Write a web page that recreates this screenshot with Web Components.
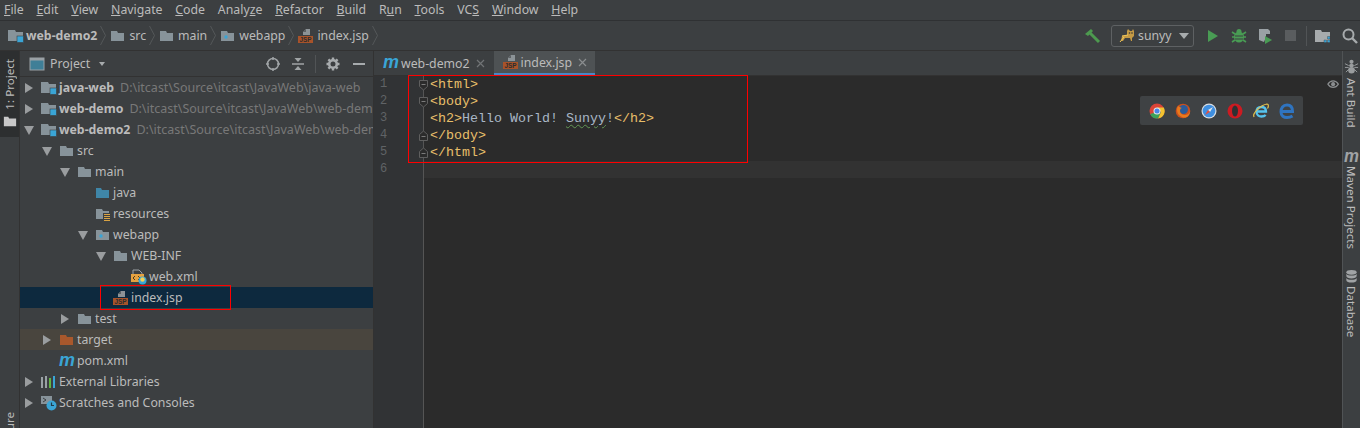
<!doctype html>
<html>
<head>
<meta charset="utf-8">
<title>IDE</title>
<style>
  html, body { margin: 0; height: 100%; overflow: hidden; background: #3c3f41; }
  body { font: 12.3px "Noto Sans", sans-serif; color: #bbbbbb; }
</style>
</head>
<body>
<ide-app></ide-app>
<script>
const ICONS = {
  folder: `<path d="M1 3h6l1 2h6v8H1z" fill="#87939a"/>`,
  module: `<path d="M0 2h7l1 2h7v9H0z" fill="#87939a"/><rect x="9" y="8" width="6.500" height="6.500" fill="#3aa5d6" stroke="#3c3f41" stroke-width=".6"/>`,
  java: `<path d="M1 3h5l1 2h7v8H1z" fill="#3f86a8"/>`,
  resources: `<path d="M1 3h6l1 2h6v8H1z" fill="#87939a"/><rect x="8" y="7" width="8" height="9" fill="#3c3f41"/><path d="M9 8.500h6M9 10.500h6M9 12.500h6M9 14.500h6" stroke="#d9a343" stroke-width="1.200"/>`,
  webapp: `<path d="M1 3h6l1 2h6v8H1z" fill="#87939a"/><circle cx="6" cy="9" r="1.700" fill="#3aa5d6"/>`,
  target: `<path d="M1 3h6l1 2h6v8H1z" fill="#a9582c"/>`,
  jsp: `<path d="M5 7V4l3-3h4v6z" fill="#8c9397"/><path d="M5 4h3V1z" fill="#5d6164"/><rect x="0" y="8" width="15" height="7" fill="#a8532a"/><text x="7.500" y="14" text-anchor="middle" font-family="Liberation Sans" font-size="6.400" font-weight="700" fill="#2d2d2d">JSP</text>`,
  xml: `<path d="M2 6V1h6l3 3v2" fill="none" stroke="#9aa1a5"/><rect x="0" y="5" width="13" height="8" fill="#e5a13f"/><path d="M4 7L2 9l2 2M7 7l2 2-2 2" stroke="#4b3a1c" fill="none"/><circle cx="11.500" cy="11.500" r="4" fill="#3aa5d6"/><circle cx="11.500" cy="10.500" r="2.200" fill="#f1d25a"/>`,
  maven: `<text x="0" y="13" font-family="Liberation Sans" font-style="italic" font-weight="700" font-size="19" fill="#3aa5d6" textLength="16" lengthAdjust="spacingAndGlyphs">m</text>`,
  libs: `<path d="M1 3v11M5 2v12" stroke="#9aa1a5" stroke-width="2"/><path d="M9 4v10" stroke="#62b543" stroke-width="2"/><path d="M13 2v12" stroke="#3aa5d6" stroke-width="2"/>`,
  scratches: `<path d="M0 1h11v8H0z" fill="#87939a"/><path d="M2 3l3 2-3 2" stroke="#3c3f41" fill="none"/><circle cx="10.500" cy="10.500" r="5" fill="#3aa5d6"/><path d="M10.500 7.500v3h2.500" stroke="#1e3c4c" fill="none" stroke-width="1.200"/>`,
  panel: `<rect x="1" y="2" width="14" height="12" fill="#3f7f97" stroke="#9aa1a5"/><rect x="1" y="2" width="14" height="2.500" fill="#9aa1a5"/>`,
  locate: `<circle cx="8" cy="8" r="5.500" fill="none" stroke="#a0a4a6" stroke-width="1.500"/><path d="M8 1v3M8 12v3M1 8h3M12 8h3" stroke="#a0a4a6" stroke-width="1.500"/>`,
  collapse: `<path d="M2 8h12" stroke="#a0a4a6" stroke-width="1.500"/><path d="M4.500 2h7L8 6zM4.500 14h7L8 10z" fill="#a0a4a6"/>`,
  gear: `<circle cx="8" cy="8" r="3.800" fill="none" stroke="#a7abad" stroke-width="2.600"/><path d="M8 1.500v3M8 11.500v3M1.500 8h3M11.500 8h3M3.400 3.400l2 2M10.600 10.600l2 2M12.600 3.400l-2 2M5.400 10.600l-2 2" stroke="#a7abad" stroke-width="2.400"/>`,
  minimize: `<path d="M2 8h12" stroke="#a7abad" stroke-width="2"/>`,
  hammer: `<path d="M1 6l6-5 2 2-5 5z" fill="#4d9a4f"/><path d="M6 5l9 9" stroke="#4d9a4f" stroke-width="3"/>`,
  cat: `<path d="M8 3l1-2 2 2h2l1-2 1 2v5l-2 2v3h-1l-1-3H6l-2 3H2l1-5 5-1z" fill="#c49a45"/><path d="M1 14l4-5M3 8l6-1" stroke="#f0c85a"/><circle cx="10.500" cy="5" r=".8" fill="#333"/><circle cx="13" cy="5" r=".8" fill="#333"/>`,
  run: `<path d="M3 2l10 6-10 6z" fill="#499c54"/>`,
  bug: `<ellipse cx="8" cy="9" rx="5" ry="5.500" fill="#499c54"/><circle cx="8" cy="3.500" r="2.500" fill="#499c54"/><path d="M1 4l3 2M15 4l-3 2M1 9h3M15 9h-3M1 14l3-2M15 14l-3-2" stroke="#499c54" stroke-width="1.600"/><path d="M4 8h8M4 11h8" stroke="#3c3f41"/>`,
  coverage: `<path d="M2 1h9l2 2v3H9v3l-2 5-5-2z" fill="#9aa1a5"/><path d="M8 8l7 4-7 4z" fill="#499c54"/>`,
  stop: `<rect x="2" y="2" width="11" height="11" fill="#5a5d5f"/>`,
  structure: `<path d="M0 2h6l1 2h8v10H0z" fill="#a7abad"/><path d="M9 12h2.500v2.500H9zM12.500 12H15v2.500h-2.500zM12.500 8.500H15V11h-2.500z" fill="#3aa5d6" stroke="#3c3f41" stroke-width=".4"/>`,
  search: `<circle cx="6.500" cy="6.500" r="5" fill="none" stroke="#a7abad" stroke-width="2"/><path d="M10 10l5 5" stroke="#a7abad" stroke-width="2.400"/>`,
  eye: `<path d="M1 7c3-5 9-5 12 0-3 5-9 5-12 0z" fill="none" stroke="#8b8e90" stroke-width="1.300"/><circle cx="7" cy="7" r="2.300" fill="#8b8e90"/>`,
  ant: `<circle cx="8" cy="3" r="2.200" fill="#9a9d9f"/><ellipse cx="8" cy="7" rx="2.500" ry="2" fill="#9a9d9f"/><ellipse cx="8" cy="12" rx="3.500" ry="3.500" fill="#9a9d9f"/><path d="M1 5l4 2M15 5l-4 2M1 9h4M15 9h-4M2 14l3-3M14 14l-3-3" stroke="#9a9d9f"/>`,
  mavenGrey: `<text x="0" y="13" font-family="Liberation Sans" font-style="italic" font-weight="700" font-size="19" fill="#a0a3a5" textLength="16" lengthAdjust="spacingAndGlyphs">m</text>`,
  db: `<ellipse cx="8" cy="3.500" rx="5.500" ry="2.500" fill="#a0a3a5"/><path d="M2.500 5v2.500c0 1.400 2.500 2.500 5.500 2.500s5.500-1.100 5.500-2.500V5c-1 1.500-3 2-5.500 2s-4.500-.5-5.500-2zM2.500 9.500V12c0 1.400 2.500 2.500 5.500 2.500s5.500-1.100 5.500-2.500V9.500c-1 1.500-3 2-5.500 2s-4.500-.5-5.500-2z" fill="#a0a3a5"/>`,
  sideFolder: `<path d="M1 3h5l1 2h8v9H1z" fill="#c8c8c8"/>`,
  chrome: `<circle cx="8" cy="8" r="7.500" fill="#db4437"/><path d="M1.200 11a7.500 7.500 0 0 0 8 4.400L12 9H8z" fill="#3ba35a"/><path d="M8 4.500h6.800a7.500 7.500 0 0 1-5.600 11L12 9z" fill="#f2c230"/><circle cx="8" cy="8" r="3.500" fill="#e8e8e8"/><circle cx="8" cy="8" r="2.500" fill="#4a85e8"/>`,
  firefox: `<circle cx="8" cy="8" r="7.300" fill="#c9501e"/><circle cx="8.500" cy="6.500" r="4.500" fill="#2b5b9a"/><path d="M3 3c-2 4-1 9 4 11s8-2 8-6c-1 3-3 4-5 4-3 0-5-2-5-4 0-2 1-3 2-3-2-1-3-1-4-2z" fill="#e87a1d"/>`,
  safari: `<circle cx="8" cy="8" r="7.500" fill="#d9dde1"/><circle cx="8" cy="8" r="6.300" fill="#3f8fe0"/><path d="M12 4L9 9 7 7z" fill="#e8e8e8"/><path d="M4 12l3-5 2 2z" fill="#e25041"/>`,
  opera: `<circle cx="8" cy="8" r="7.500" fill="#cc1b22"/><ellipse cx="8" cy="8" rx="3" ry="5.500" fill="#2e3133"/>`,
  ie: `<path d="M3.500 8.500h9.500C13 5.500 11 4 8.500 4 5.500 4 3.500 6 3.500 9s2.500 4.500 5 4.500c1.800 0 3.200-.5 4.200-1.500" fill="none" stroke="#56c3ee" stroke-width="2.300"/><path d="M1 14C-1 10 8 2 14 1c2 0 1.500 3 .5 4.500" fill="none" stroke="#e8c24a" stroke-width="1.200"/>`,
  edge: `<path d="M2.500 8.500H13.500C13.500 4 11 2 8 2 4 2 2 5 2 9c0 4 3 5.500 6 5.500 2 0 4-.5 5.500-1.500" fill="none" stroke="#2f74c0" stroke-width="3"/>`
};

class IdeIcon extends HTMLElement {
  connectedCallback() {
    const size = this.getAttribute("size") || 16;
    this.attachShadow({ mode: "open" }).innerHTML = `
      <style>
        :host { display: block; width: ${size}px; height: ${size}px; flex: none; }
        svg { display: block; overflow: visible; }
      </style>
      <svg width="${size}" height="${size}" viewBox="0 0 16 16">${ICONS[this.getAttribute("name")] || ""}</svg>`;
  }
}

class MenuBar extends HTMLElement {
  constructor() {
    super();
    const items = ["File", "Edit", "View", "Navigate", "Code", "Analyze", "Refactor", "Build", "Run", "Tools", "VCS", "Window", "Help"];
    const marks = { Analyze: 5, Run: 1, VCS: 2 };
    const html = items.map((t) => {
      const i = marks[t] || 0;
      return `<span>${t.slice(0, i)}<u>${t[i]}</u>${t.slice(i + 1)}</span>`;
    }).join("");
    this.attachShadow({ mode: "open" }).innerHTML = `
      <style>
        :host { display: flex; height: 20px; padding-left: 4px; gap: 12.800px; align-items: center; border-bottom: 1px solid #2f3133; white-space: nowrap; }
        span { line-height: 20px; }
      </style>${html}`;
  }
}

class NavBar extends HTMLElement {
  constructor() {
    super();
    const chev = `<svg class="chev" viewBox="0 0 6 29"><path d="M0.500 5l5 9.500-5 9.500" fill="none" stroke="#55585a"/></svg>`;
    this.attachShadow({ mode: "open" }).innerHTML = `
      <style>
        :host { display: flex; align-items: center; height: 29px; padding-left: 8px; border-bottom: 1px solid #323232; }
        .crumbs, .tools { display: flex; align-items: center; }
        .crumb { display: flex; align-items: center; gap: 3px; }
        .chev { width: 6px; height: 29px; margin: 0 4px 0 3px; flex: none; }
        b { font-weight: 700; }
        .tools { margin-left: auto; padding-right: 2px; }
        .config { display: flex; align-items: center; gap: 3px; width: 83px; height: 22px; box-sizing: border-box; border: 1px solid #5e6163; border-radius: 3px; padding-left: 7px; margin: 0 11px; }
        .caret { width: 0; height: 0; border: 5px solid transparent; border-top: 6px solid #a7abad; border-bottom: 0; margin-left: 4px; }
        .sep { width: 1px; height: 20px; background: #515456; margin: 0 8px 0 7px; }
        .gap { margin-right: 10px; }
      </style>
      <div class="crumbs">
        <div class="crumb" style="gap:2px"><ide-icon name="module"></ide-icon><b>web-demo2</b></div>${chev}
        <div class="crumb"><ide-icon name="folder"></ide-icon>src</div>${chev}
        <div class="crumb"><ide-icon name="folder"></ide-icon>main</div>${chev}
        <div class="crumb"><ide-icon name="webapp"></ide-icon>webapp</div>${chev}
        <div class="crumb"><ide-icon name="jsp"></ide-icon>index.jsp</div>${chev}
      </div>
      <div class="tools">
        <ide-icon name="hammer"></ide-icon>
        <div class="config"><ide-icon name="cat"></ide-icon>sunyy<i class="caret"></i></div>
        <ide-icon class="gap" name="run"></ide-icon>
        <ide-icon class="gap" name="bug"></ide-icon>
        <ide-icon class="gap" name="coverage"></ide-icon>
        <ide-icon name="stop"></ide-icon>
        <i class="sep"></i>
        <ide-icon name="structure" style="margin-right:11px"></ide-icon>
        <ide-icon name="search"></ide-icon>
      </div>`;
  }
}

class SideStrip extends HTMLElement {
  constructor() {
    super();
    this.attachShadow({ mode: "open" }).innerHTML = `
      <style>
        :host { display: flex; flex-direction: column; align-items: center; overflow: hidden; box-sizing: border-box; flex: none; }
        :host([side="left"]) { width: 20px; border-right: 1px solid #323232; }
        :host([side="right"]) { width: 18px; border-left: 1px solid #505355; }
      </style><slot></slot>`;
  }
}

class StripTab extends HTMLElement {
  constructor() {
    super();
    this.attachShadow({ mode: "open" }).innerHTML = `
      <style>
        :host { display: flex; flex-direction: column; align-items: center; gap: 4px; flex: none; width: 100%; box-sizing: border-box; font-size: 11.600px; line-height: 17px; white-space: nowrap; }
        :host([active]) { background: #2d2f30; }
        .t { writing-mode: vertical-rl; }
        :host([flip]) .t { transform: rotate(180deg); }
      </style><slot name="before"></slot><span class="t"><slot></slot></span><slot name="after"></slot>`;
  }
}

class ToolHeader extends HTMLElement {
  constructor() {
    super();
    this.attachShadow({ mode: "open" }).innerHTML = `
      <style>
        :host { display: flex; align-items: center; height: 26px; padding-left: 9px; box-sizing: border-box; border-bottom: 1px solid #323232; flex: none; }
        .name { margin-left: 5px; }
        .caret { width: 0; height: 0; border: 3.500px solid transparent; border-top: 4px solid #a7abad; border-bottom: 0; margin-left: 9px; }
        .right { margin-left: auto; display: flex; align-items: center; }
        .sep { width: 1px; height: 18px; background: #515456; margin: 0 9px; }
      </style>
      <ide-icon name="panel"></ide-icon><span class="name">Project</span><i class="caret"></i>
      <div class="right">
        <ide-icon name="locate"></ide-icon><ide-icon name="collapse" style="margin-left:9px"></ide-icon>
        <i class="sep"></i>
        <ide-icon name="gear"></ide-icon><ide-icon name="minimize" style="margin:0 6px 0 10px"></ide-icon>
      </div>`;
  }
}

class TreeRow extends HTMLElement {
  connectedCallback() {
    const level = +this.getAttribute("level") || 0;
    const arrow = this.getAttribute("arrow");
    const glyph = arrow === "open"
      ? `<path d="M1 2h10L6 11z" fill="#9a9d9f"/>`
      : arrow === "closed" ? `<path d="M2 1l8 5-8 5z" fill="#9a9d9f"/>` : "";
    this.attachShadow({ mode: "open" }).innerHTML = `
      <style>
        :host { display: flex; align-items: center; height: 21px; padding-left: ${3 + 18 * level}px; white-space: nowrap; box-sizing: border-box; }
        :host([selected]) { background: #0d293e; }
        :host([excluded]) { background: #49453e; }
        .arrow { width: 18px; flex: none; display: block; }
        ide-icon { margin-right: 2px; }
        ::slotted(b) { font-weight: 700; }
        ::slotted(em) { font-style: normal; font-size: 12.500px; color: #787878; margin-left: 6px; }
      </style>
      <svg class="arrow" width="18" height="12" viewBox="0 0 18 12">${glyph}</svg>
      <ide-icon name="${this.getAttribute("icon")}"></ide-icon><slot></slot>`;
  }
}

class EditorTab extends HTMLElement {
  connectedCallback() {
    const active = this.hasAttribute("active");
    this.attachShadow({ mode: "open" }).innerHTML = `
      <style>
        :host { display: flex; align-items: center; gap: 2px; height: 24px; box-sizing: border-box; padding: 0 9px 0 8px; flex: none; }
        :host([active]) { background: #4e5254; border-bottom: 2px solid #4a88c7; padding: 0 8px 0 9px; }
        .x { margin-left: 4px; }
      </style>
      <ide-icon name="${this.getAttribute("icon")}"></ide-icon><slot></slot>
      <svg class="x" width="9" height="9" viewBox="0 0 9 9"><path d="M1 1l7 7M8 1L1 8" stroke="${active ? "#8a8d8f" : "#717476"}" stroke-width="1.200"/></svg>`;
  }
}

class CodeGutter extends HTMLElement {
  connectedCallback() {
    const open = `<path d="M1.500 1.500h8v6l-4 3.500-4-3.500z" fill="#2b2b2b" stroke="#5f5f5f"/><path d="M3.500 5.500h4" stroke="#7a7a7a"/>`;
    const close = `<path d="M1.500 10.500h8v-6l-4-3.500-4 3.500z" fill="#2b2b2b" stroke="#5f5f5f"/><path d="M3.500 6.500h4" stroke="#7a7a7a"/>`;
    const folds = [open, open, "", close, close, ""];
    this.attachShadow({ mode: "open" }).innerHTML = `
      <style>
        :host { display: block; width: 50px; flex: none; box-sizing: border-box; background: #313335; border-right: 1px solid #555; color: #606366; font: 12px/17px "Liberation Mono", monospace; }
        div { height: 17px; padding-left: 6px; position: relative; }
        svg { position: absolute; right: -6px; top: 3px; }
      </style>
      ${folds.map((f, i) => `<div>${i + 1}${f ? `<svg width="11" height="12" viewBox="0 0 11 12">${f}</svg>` : ""}</div>`).join("")}`;
  }
}

class CodeLine extends HTMLElement {
  constructor() {
    super();
    // no whitespace before <style>: this host has white-space: pre
    this.attachShadow({ mode: "open" }).innerHTML = `<style>
        :host { display: block; height: 17px; padding-left: 6px; white-space: pre; font: 13.333px/17px "Liberation Mono", monospace; color: #a9b7c6; }
        :host([caret]) { background: #323232; }
      </style><slot></slot>`;
  }
}

class BrowserPopup extends HTMLElement {
  constructor() {
    super();
    const names = ["chrome", "firefox", "safari", "opera", "ie", "edge"];
    this.attachShadow({ mode: "open" }).innerHTML = `
      <style>
        :host { position: absolute; left: 766px; top: 45px; display: flex; gap: 10px; align-items: center; padding: 0 8px 0 9px; height: 29px; background: #3f4244; border-radius: 2px; }
      </style>${names.map((n) => `<ide-icon name="${n}"></ide-icon>`).join("")}`;
  }
}

class RedBox extends HTMLElement {
  constructor() {
    super();
    this.attachShadow({ mode: "open" }).innerHTML = `
      <style>:host { position: absolute; box-sizing: border-box; border: 1px solid #f00; pointer-events: none; }</style>`;
  }
}

class IdeApp extends HTMLElement {
  constructor() {
    super();
    const tag = (s) => `<span class="t">${s}</span>`;
    this.attachShadow({ mode: "open" }).innerHTML = `
      <style>
        :host { display: flex; flex-direction: column; width: 1360px; height: 428px; overflow: hidden; position: relative; }
        main { flex: 1; display: flex; min-height: 0; }
        .project { width: 353px; flex: none; display: flex; flex-direction: column; overflow: hidden; border-right: 1px solid #323232; }
        .editor { flex: 1; display: flex; flex-direction: column; position: relative; min-width: 0; background: #2b2b2b; }
        .tabs { display: flex; height: 25px; flex: none; background: #3c3f41; border-bottom: 1px solid #323232; box-sizing: border-box; padding-left: 1px; }
        .lines { flex: 1; display: flex; min-height: 0; }
        .code { flex: 1; min-width: 0; }
        .t { color: #e8bf6a; }
        .w { text-decoration: underline wavy #629755 1px; text-underline-offset: 2px; }
        .eye { position: absolute; right: 1px; top: 27px; }
        b { font-weight: 700; }
      </style>
      <menu-bar></menu-bar>
      <nav-bar></nav-bar>
      <main>
        <side-strip side="left">
          <strip-tab active flip style="height:86px;padding-top:8px"><span>1: Project</span><ide-icon slot="after" name="sideFolder" size="14"></ide-icon></strip-tab>
          <strip-tab flip style="margin-top:275px"><span>7: Structure</span></strip-tab>
        </side-strip>
        <section class="project">
          <tool-header></tool-header>
          <tree-row level="0" arrow="closed" icon="module"><b>java-web</b><em>D:\\itcast\\Source\\itcast\\JavaWeb\\java-web</em></tree-row>
          <tree-row level="0" arrow="closed" icon="module"><b>web-demo</b><em>D:\\itcast\\Source\\itcast\\JavaWeb\\web-demo</em></tree-row>
          <tree-row level="0" arrow="open" icon="module"><b>web-demo2</b><em>D:\\itcast\\Source\\itcast\\JavaWeb\\web-demo2</em></tree-row>
          <tree-row level="1" arrow="open" icon="folder">src</tree-row>
          <tree-row level="2" arrow="open" icon="folder">main</tree-row>
          <tree-row level="3" icon="java">java</tree-row>
          <tree-row level="3" icon="resources">resources</tree-row>
          <tree-row level="3" arrow="open" icon="webapp">webapp</tree-row>
          <tree-row level="4" arrow="open" icon="folder">WEB-INF</tree-row>
          <tree-row level="5" icon="xml">web.xml</tree-row>
          <tree-row level="4" selected icon="jsp">index.jsp</tree-row>
          <tree-row level="2" arrow="closed" icon="folder">test</tree-row>
          <tree-row level="1" arrow="closed" excluded icon="target">target</tree-row>
          <tree-row level="1" icon="maven">pom.xml</tree-row>
          <tree-row level="0" arrow="closed" icon="libs">External Libraries</tree-row>
          <tree-row level="0" arrow="closed" icon="scratches">Scratches and Consoles</tree-row>
        </section>
        <section class="editor">
          <div class="tabs">
            <editor-tab icon="maven">web-demo2</editor-tab>
            <editor-tab active icon="jsp">index.jsp</editor-tab>
          </div>
          <div class="lines">
            <code-gutter></code-gutter>
            <div class="code">
              <code-line>${tag("&lt;html&gt;")}</code-line>
              <code-line>${tag("&lt;body&gt;")}</code-line>
              <code-line>${tag("&lt;h2&gt;")}Hello World! <span class="w">Sunyy</span>!${tag("&lt;/h2&gt;")}</code-line>
              <code-line>${tag("&lt;/body&gt;")}</code-line>
              <code-line>${tag("&lt;/html&gt;")}</code-line>
              <code-line caret></code-line>
            </div>
          </div>
          <ide-icon class="eye" name="eye" size="14"></ide-icon>
          <browser-popup></browser-popup>
        </section>
        <side-strip side="right">
          <strip-tab style="margin-top:8px"><ide-icon slot="before" name="ant" size="15"></ide-icon><span>Ant Build</span></strip-tab>
          <strip-tab style="margin-top:22px;gap:1px"><ide-icon slot="before" name="mavenGrey" size="15"></ide-icon><span>Maven Projects</span></strip-tab>
          <strip-tab style="margin-top:20px;gap:2px"><ide-icon slot="before" name="db" size="15"></ide-icon><span>Database</span></strip-tab>
        </side-strip>
      </main>
      <red-box style="left:100px;top:285px;width:131px;height:25px"></red-box>
      <red-box style="left:408px;top:75px;width:340px;height:88px"></red-box>`;
  }
}

customElements.define("ide-icon", IdeIcon);
customElements.define("menu-bar", MenuBar);
customElements.define("nav-bar", NavBar);
customElements.define("side-strip", SideStrip);
customElements.define("strip-tab", StripTab);
customElements.define("tool-header", ToolHeader);
customElements.define("tree-row", TreeRow);
customElements.define("editor-tab", EditorTab);
customElements.define("code-gutter", CodeGutter);
customElements.define("code-line", CodeLine);
customElements.define("browser-popup", BrowserPopup);
customElements.define("red-box", RedBox);
customElements.define("ide-app", IdeApp);
</script>
</body>
</html>
